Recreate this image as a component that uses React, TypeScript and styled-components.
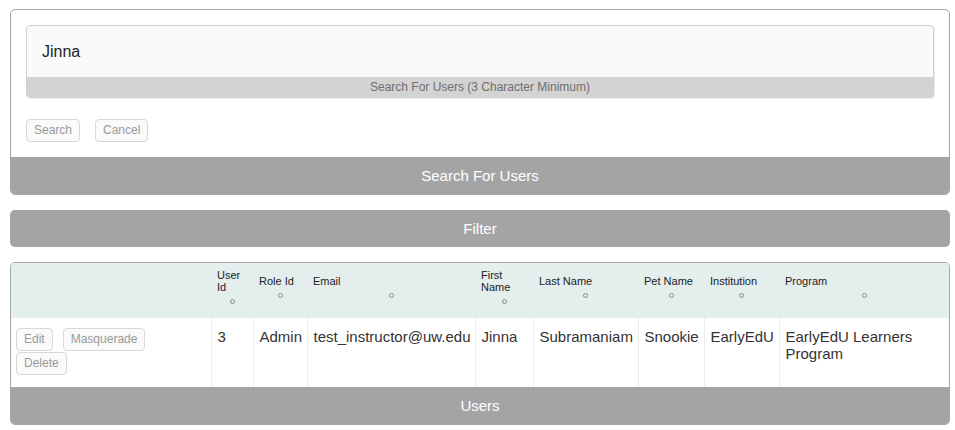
import styled, { createGlobalStyle } from 'styled-components';

const GlobalStyle = createGlobalStyle`
  body {
    margin: 0;
    background: #fff;
    font-family: 'Liberation Sans', Arial, sans-serif;
  }
`;

const Page = styled.div`
  display: flex;
  flex-direction: column;
  gap: 15px;
  padding: 9px 5px 0 10px;
`;

const Panel = styled.div`
  border: 1px solid #a6a6a6;
  border-radius: 5px;
  overflow: hidden;
  background: #fff;
`;

const PanelBody = styled.div`
  padding: 15px 15px 15px 15px;
`;

const SearchBox = styled.div`
  border: 1px solid #cfcfcf;
  border-radius: 4px;
  overflow: hidden;
  background: #fafafa;
  box-shadow: 1px 1px 1px rgba(0, 0, 0, 0.08);
`;

const SearchInput = styled.input`
  display: block;
  box-sizing: border-box;
  width: 100%;
  height: 51px;
  border: none;
  outline: none;
  background: transparent;
  padding: 0 15px;
  font-family: 'Liberation Sans', Arial, sans-serif;
  font-size: 16px;
  color: #222;
`;

const Hint = styled.div`
  height: 20px;
  line-height: 20px;
  background: #d3d3d3;
  text-align: center;
  font-size: 12px;
  color: #6f6f6f;
`;

const ButtonRow = styled.div`
  display: flex;
  gap: 15px;
  margin-top: 21px;
`;

const SmallButton = styled.button`
  box-sizing: border-box;
  height: 23px;
  padding: 0 7px;
  border: 1px solid #d8d8d8;
  border-radius: 4px;
  background: #fafafa;
  color: #999;
  font-family: 'Liberation Sans', Arial, sans-serif;
  font-size: 12px;
  line-height: 21px;
  cursor: pointer;
`;

const Bar = styled.div<{ $rounded?: boolean }>`
  height: 37px;
  line-height: 37px;
  background: #a4a4a4;
  color: #fff;
  text-align: center;
  font-size: 15px;
  border-radius: ${(p) => (p.$rounded ? '5px' : '0')};
`;

const Table = styled.table`
  width: 100%;
  border-collapse: collapse;
  table-layout: fixed;
`;

const HeadRow = styled.tr`
  height: 55px;
  background: #e4eeec;
`;

const HeadCell = styled.th`
  padding: 6px 6px 14px;
  vertical-align: middle;
  text-align: left;
  font-weight: normal;
  font-size: 11px;
  line-height: 12px;
  color: #222;
`;

const SortMark = styled.div`
  display: flex;
  justify-content: center;
  margin-top: 6px;

  &::after {
    content: '';
    width: 3px;
    height: 3px;
    border: 1px solid #888;
    border-radius: 50%;
  }
`;

const DataRow = styled.tr`
  height: 69px;
`;

const DataCell = styled.td`
  padding: 10px 6px 8px;
  vertical-align: top;
  font-size: 15px;
  line-height: 17px;
  color: #333;
  border-left: 1px solid #ececec;

  &:first-child {
    border-left: none;
  }
`;

const ActionCell = styled.td`
  padding: 10px 5px 8px;
  vertical-align: top;
`;

const Actions = styled.div`
  display: flex;
  flex-wrap: wrap;
  column-gap: 10px;
  row-gap: 1px;
  max-width: 150px;
`;

const columns = [
  { key: 'actions', label: '', width: 200 },
  { key: 'userId', label: 'User Id', width: 42 },
  { key: 'roleId', label: 'Role Id', width: 54 },
  { key: 'email', label: 'Email', width: 168 },
  { key: 'firstName', label: 'First Name', width: 58 },
  { key: 'lastName', label: 'Last Name', width: 105 },
  { key: 'petName', label: 'Pet Name', width: 66 },
  { key: 'institution', label: 'Institution', width: 75 },
  { key: 'program', label: 'Program', width: 170 },
];

const users = [
  {
    userId: '3',
    roleId: 'Admin',
    email: 'test_instructor@uw.edu',
    firstName: 'Jinna',
    lastName: 'Subramaniam',
    petName: 'Snookie',
    institution: 'EarlyEdU',
    program: 'EarlyEdU Learners Program',
  },
];

const App = () => {
  return (
    <>
      <GlobalStyle />
      <Page>
        <Panel>
          <PanelBody>
            <SearchBox>
              <SearchInput defaultValue="Jinna" />
              <Hint>Search For Users (3 Character Minimum)</Hint>
            </SearchBox>
            <ButtonRow>
              <SmallButton type="button">Search</SmallButton>
              <SmallButton type="button">Cancel</SmallButton>
            </ButtonRow>
          </PanelBody>
          <Bar>Search For Users</Bar>
        </Panel>

        <Bar $rounded>Filter</Bar>

        <Panel>
          <Table>
            <colgroup>
              {columns.map((c) => (
                <col key={c.key} style={{ width: c.width }} />
              ))}
            </colgroup>
            <thead>
              <HeadRow>
                {columns.map((c) => (
                  <HeadCell key={c.key}>
                    {c.label && (
                      <>
                        {c.label}
                        <SortMark />
                      </>
                    )}
                  </HeadCell>
                ))}
              </HeadRow>
            </thead>
            <tbody>
              {users.map((u) => (
                <DataRow key={u.userId}>
                  <ActionCell>
                    <Actions>
                      <SmallButton type="button">Edit</SmallButton>
                      <SmallButton type="button">Masquerade</SmallButton>
                      <SmallButton type="button">Delete</SmallButton>
                    </Actions>
                  </ActionCell>
                  <DataCell>{u.userId}</DataCell>
                  <DataCell>{u.roleId}</DataCell>
                  <DataCell>{u.email}</DataCell>
                  <DataCell>{u.firstName}</DataCell>
                  <DataCell>{u.lastName}</DataCell>
                  <DataCell>{u.petName}</DataCell>
                  <DataCell>{u.institution}</DataCell>
                  <DataCell>{u.program}</DataCell>
                </DataRow>
              ))}
            </tbody>
          </Table>
          <Bar>Users</Bar>
        </Panel>
      </Page>
    </>
  );
};

export default App;
